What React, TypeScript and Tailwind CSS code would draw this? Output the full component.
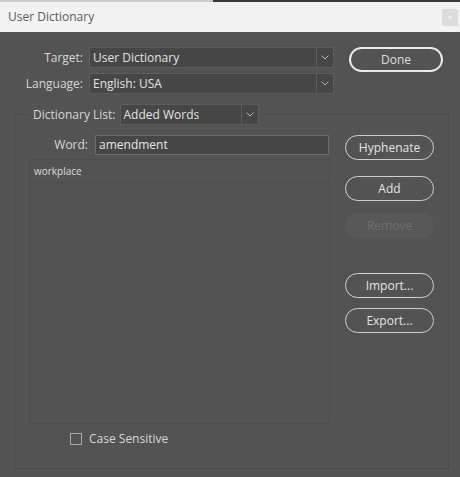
import { ReactNode } from 'react'

const font = { fontFamily: '"Open Sans", "Noto Sans", sans-serif' }

function Chevron() {
  return (
    <svg width="8" height="5" viewBox="0 0 8 5" className="text-[#b8b8b8]">
      <polyline points="0.5,0.5 4,4 7.5,0.5" fill="none" stroke="currentColor" strokeWidth="1" />
    </svg>
  )
}

function Dropdown({ value, width }: { value: string; width: string }) {
  return (
    <div
      className={`${width} h-[21px] flex items-stretch bg-[#464646] border border-[#5c5c5c] text-[12px] text-[#e2e2e2]`}
    >
      <div className="flex-1 flex items-center pl-[3px] leading-none">{value}</div>
      <div className="w-[17px] flex items-center justify-center border-l border-[#5c5c5c]">
        <Chevron />
      </div>
    </div>
  )
}

function PillButton({ children, disabled }: { children: ReactNode; disabled?: boolean }) {
  if (disabled) {
    return (
      <div className="w-[89px] h-[25px] rounded-full bg-[#585858] flex items-center justify-center text-[12px] text-[#6f6f6f]">
        {children}
      </div>
    )
  }
  return (
    <div className="w-[89px] h-[25px] rounded-full border-[1.5px] border-[#cfcfcf] flex items-center justify-center text-[12px] text-[#e4e4e4]">
      {children}
    </div>
  )
}

export default function App() {
  return (
    <div className="w-[460px] h-[477px] bg-[#535353] flex flex-col overflow-hidden select-none" style={font}>
      {/* top strip */}
      <div className="h-[2px] flex">
        <div className="w-[213px] bg-[#cdcdcd]" />
        <div className="flex-1 bg-[#3b3b3b]" />
      </div>

      {/* title bar */}
      <div className="h-[30px] bg-[#f2f2f2] flex items-center justify-between pl-[8px] pr-[2px]">
        <span className="text-[12px] text-[#5b5b5b]">User Dictionary</span>
        <div className="w-[16px] h-[17px] bg-[#dcdcdc] flex items-center justify-center text-[8px] text-white leading-none">
          ×
        </div>
      </div>

      {/* body */}
      <div className="flex-1 flex flex-col pt-[15px]">
        <div className="flex items-start">
          <div className="flex flex-col gap-[5px]">
            <div className="flex items-center">
              <span className="w-[83px] text-right text-[12px] text-[#d6d6d6]">Target:</span>
              <div className="ml-[6px]">
                <Dropdown value="User Dictionary" width="w-[245px]" />
              </div>
            </div>
            <div className="flex items-center">
              <span className="w-[83px] text-right text-[12px] text-[#d6d6d6]">Language:</span>
              <div className="ml-[6px]">
                <Dropdown value="English: USA" width="w-[245px]" />
              </div>
            </div>
          </div>
          <div className="ml-[15px] w-[94px] h-[25px] rounded-full border-2 border-[#e9e9e9] flex items-center justify-center text-[12px] text-[#dedede]">
            Done
          </div>
        </div>

        <fieldset className="ml-[14px] mt-[10px] w-[435px] h-[365px] border border-[#4a4a4a] pl-[14px] pt-[10px]">
          <legend className="px-[4px]">
            <div className="flex items-center">
              <span className="text-[12px] text-[#d6d6d6]">Dictionary List:</span>
              <div className="ml-[4px]">
                <Dropdown value="Added Words" width="w-[139px]" />
              </div>
            </div>
          </legend>

          <div className="flex items-start">
            {/* left column */}
            <div className="w-[301px] flex flex-col">
              <div className="flex items-center">
                <span className="w-[59px] text-right text-[12px] text-[#d6d6d6]">Word:</span>
                <div className="ml-[7px] w-[234px] h-[20px] bg-[#464646] border border-[#6a6a6a] flex items-center pl-[3px] text-[12px] text-[#e6e6e6]">
                  amendment
                </div>
              </div>
              <div className="mt-[4px] h-[265px] border border-[#4c4c4c] flex flex-col">
                <div className="h-[23px] border-b border-[#4e4e4e] flex items-center pl-[4px] text-[10px] text-[#dcdcdc]">
                  workplace
                </div>
              </div>
              <div className="mt-[6px] ml-[41px] flex items-center gap-[7px]">
                <div className="w-[12px] h-[12px] border border-[#a9a9a9]" />
                <span className="text-[12px] text-[#d6d6d6]">Case Sensitive</span>
              </div>
            </div>

            {/* right column */}
            <div className="ml-[15px] flex flex-col">
              <PillButton>Hyphenate</PillButton>
              <div className="mt-[16px]">
                <PillButton>Add</PillButton>
              </div>
              <div className="mt-[12px]">
                <PillButton disabled>Remove</PillButton>
              </div>
              <div className="mt-[35px]">
                <PillButton>Import...</PillButton>
              </div>
              <div className="mt-[10px]">
                <PillButton>Export...</PillButton>
              </div>
            </div>
          </div>
        </fieldset>
      </div>
    </div>
  )
}
